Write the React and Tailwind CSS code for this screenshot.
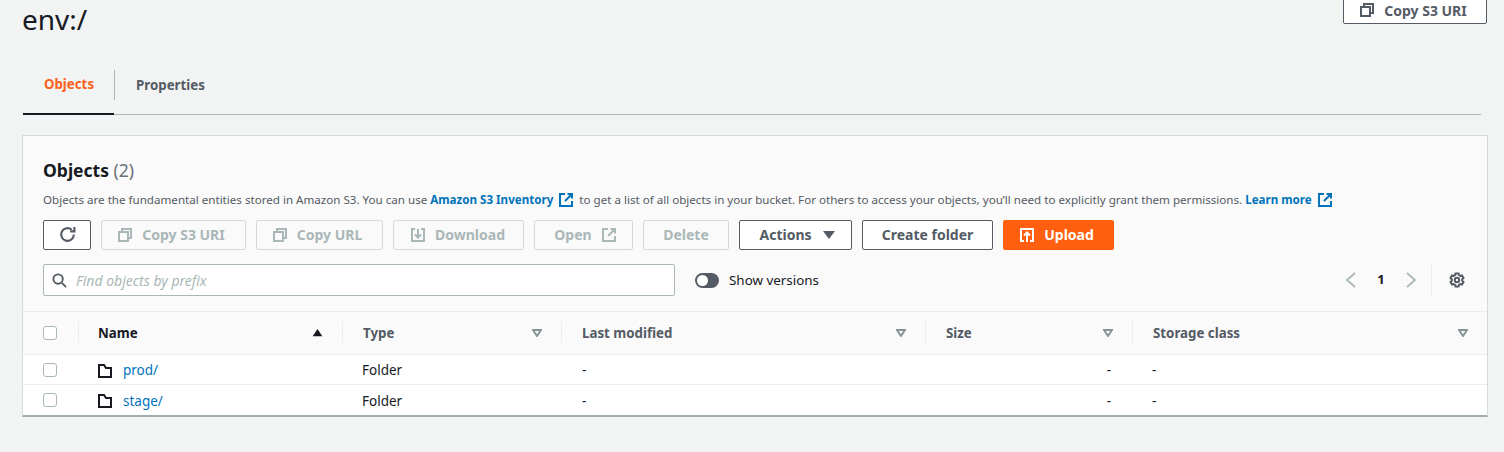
import React from "react";

const Copy = ({ c = "" }) => (
  <svg viewBox="0 0 14 14" className={`w-[14px] h-[14px] ${c}`} fill="none" stroke="currentColor" strokeWidth="2">
    <rect x="1" y="4" width="9" height="9" />
    <path d="M4 3.500V1h9v9h-2.500" />
  </svg>
);
const Ext = ({ c = "" }) => (
  <svg viewBox="0 0 14 14" className={c} fill="none" stroke="currentColor" strokeWidth="2">
    <path d="M6 1H1v12h12V8" />
    <path d="M8.500 1H13v4.500M13 1L6 8" />
  </svg>
);
const Sort = () => (
  <svg viewBox="0 0 10 8" className="w-[10px] h-[8px] text-[#879596]" fill="none" stroke="currentColor" strokeWidth="2">
    <path d="M1 1h8L5 7z" />
  </svg>
);
const Folder = () => (
  <svg viewBox="0 0 14 14" className="w-[14px] h-[14px] text-[#16191f]" fill="none" stroke="currentColor" strokeWidth="2">
    <path d="M1 1h5l2 3h5v9H1z" />
  </svg>
);
const Check = () => <span className="block w-[14px] h-[14px] rounded-[3px] border border-[#aab7b8] bg-white" />;

const Btn = ({ w, disabled, children }) => (
  <button
    className={`${w} h-[30px] pb-[1px] flex items-center justify-center gap-[10px] rounded-[2px] border text-[14px] font-bold ${
      disabled ? "border-[#d5dbdb] text-[#aab7b8] bg-transparent" : "border-[#545b64] text-[#545b64] bg-white"
    }`}
  >
    {children}
  </button>
);
const Div = () => <span className="absolute left-0 top-[10px] h-[21px] w-px bg-[#eaeded]" />;
const Head = ({ label, dark, divider, narrow, children }) => (
  <div className={`relative h-[42px] flex items-center justify-between ${narrow ? "pl-[20px]" : "pl-[21px]"} pr-[19px] text-[13.3px] font-bold ${dark ? "text-[#16191f]" : "text-[#545b64]"}`}>
    {divider && <Div />}
    <span className="pt-[2px]">{label}</span>
    {children}
  </div>
);
const Row = ({ name, last }) => (
  <div className={`grid grid-cols-[55px_264px_219px_364px_207px_1fr] h-[30px] items-center text-[13.5px] text-[#16191f] bg-white ${last ? "" : "border-b border-[#eaeded]"}`}>
    <div className="pl-[20px]"><Check /></div>
    <div className="flex items-center gap-[11px] pl-[20px] pt-[2px]">
      <Folder />
      <a className="text-[#0073bb]">{name}</a>
    </div>
    <div className="pl-[20px] pt-[2px]">Folder</div>
    <div className="pl-[21px] pt-[2px]">-</div>
    <div className="text-right pr-[21px] pt-[2px]">-</div>
    <div className="pl-[20px] pt-[2px]">-</div>
  </div>
);

export default function App() {
  return (
    <div className="w-[1504px] h-[452px] overflow-hidden bg-[#f2f3f3] font-['Noto_Sans',sans-serif]">
      <div className="flex justify-between items-start pl-[22px] pr-[17px] h-[70px]">
        <h1 className="text-[28px] leading-[36px] text-[#16191f] mt-[1px]">env:/</h1>
        <button className="-mt-[6px] w-[144px] h-[30px] pt-[2px] flex items-center justify-center gap-[10px] pr-[3px] rounded-[2px] border border-[#545b64] bg-white text-[14px] font-bold text-[#545b64]">
          <Copy />Copy S3 URI
        </button>
      </div>

      <div className="mx-[23px] h-[45px] flex border-b border-[#a9bcbc]">
        <div className="w-[91px] h-[45px] border-b-2 border-[#16191f] flex items-center justify-center text-[13.3px] font-bold text-[#f9621c] pb-[13px] pl-px">
          Objects
        </div>
        <div className="relative pl-[22px] h-[30px] pt-[2px] flex items-center text-[13.3px] font-bold text-[#545b64]">
          <span className="absolute left-0 top-0 h-[30px] w-px bg-[#aab7b8]" />
          Properties
        </div>
      </div>

      <div className="ml-[22px] mt-[20px] bg-[#fafafa] border-x border-t border-[#d5dbdb] border-b-2 border-b-[#a2adad] rounded-[1px] w-[1466px]">
        <div className="px-[20px] pt-[22px]">
          <div className="text-[17.500px] leading-[24px] font-bold text-[#16191f]">
            Objects <span className="font-normal text-[#687078]">(2)</span>
          </div>
          <p className="mt-[7px] h-[20px] pt-[2px] flex items-center text-[11.6px] text-[#545b64] whitespace-nowrap">
            Objects are the fundamental entities stored in Amazon S3. You can use&nbsp;
            <b className="text-[#0073bb]">Amazon S3 Inventory</b>
            <Ext c="w-[14px] h-[14px] mx-[6px] text-[#0073bb]" />
            to get a list of all objects in your bucket. For others to access your objects, you’ll need to explicitly grant them permissions.&nbsp;
            <b className="text-[#0073bb]">Learn more</b>
            <Ext c="w-[14px] h-[14px] ml-[6px] text-[#0073bb]" />
          </p>
          <div className="mt-[11px] flex gap-[10px]">
            <Btn w="w-[48px]">
              <svg viewBox="0 0 16 16" className="w-[17px] h-[17px]" fill="none" stroke="currentColor" strokeWidth="2">
                <path d="M14 8a6 6 0 1 1-2-4.500" />
                <path d="M14.500 1v4h-4" />
              </svg>
            </Btn>
            <Btn w="w-[145px]" disabled><Copy c="-ml-[4px]" />Copy S3 URI</Btn>
            <Btn w="w-[127px]" disabled><Copy c="-ml-[4px]" />Copy URL</Btn>
            <Btn w="w-[131px]" disabled>
              <svg viewBox="0 0 14 14" className="w-[14px] h-[14px] -ml-[1px]" fill="none" stroke="currentColor" strokeWidth="2">
                <path d="M4 1H1v12h12V1h-3M7 1v8M4 6.500L7 9.500 10 6.500" />
              </svg>
              Download
            </Btn>
            <Btn w="w-[99px]" disabled><span className="ml-[3px]">Open</span><Ext c="w-[14px] h-[14px]" /></Btn>
            <Btn w="w-[86px]" disabled>Delete</Btn>
            <Btn w="w-[113px]">
              <span className="ml-[3px]">Actions</span>
              <svg viewBox="0 0 12 10" className="w-[12px] h-[10px] ml-[1px]" fill="currentColor"><path d="M0 1h12L6 9z" /></svg>
            </Btn>
            <Btn w="w-[131px]">Create folder</Btn>
            <button className="w-[111px] h-[30px] pb-[1px] flex items-center justify-center gap-[10px] pr-[3px] rounded-[2px] bg-[#ff5f0f] text-[14px] font-bold text-white">
              <svg viewBox="0 0 14 14" className="w-[14px] h-[14px]" fill="none" stroke="currentColor" strokeWidth="2">
                <path d="M4 13H1V1h12v12h-3M7 14V5M4 7.500L7 4.500 10 7.500" />
              </svg>
              Upload
            </button>
          </div>
          <div className="mt-[14px] h-[32px] flex items-center">
            <div className="w-[632px] h-[32px] flex items-center gap-[9px] pl-[8px] rounded-[2px] border border-[#aab7b8] bg-white">
              <svg viewBox="0 0 16 16" className="w-[15px] h-[15px] text-[#545b64]" fill="none" stroke="currentColor" strokeWidth="2">
                <circle cx="6.500" cy="6.500" r="5" />
                <path d="M10.500 10.500L15 15" />
              </svg>
              <span className="pt-[1px] text-[14px] italic text-[#aab7b8]">Find objects by prefix</span>
            </div>
            <span className="ml-[20px] w-[24px] h-[15px] rounded-full bg-[#545b64] flex items-center pl-[2px]">
              <span className="w-[11px] h-[11px] rounded-full bg-white" />
            </span>
            <span className="ml-[10px] pt-[1px] text-[13.4px] text-[#16191f]">Show versions</span>
            <div className="ml-auto flex items-center">
              <svg viewBox="0 0 12 16" className="w-[12px] h-[16px] text-[#aab7b8]" fill="none" stroke="currentColor" strokeWidth="1.800">
                <path d="M10 1L2 8l8 7" />
              </svg>
              <span className="w-[48px] text-center text-[13px] font-bold text-[#16191f]">1</span>
              <svg viewBox="0 0 12 16" className="w-[12px] h-[16px] text-[#aab7b8]" fill="none" stroke="currentColor" strokeWidth="1.800">
                <path d="M2 1l8 7-8 7" />
              </svg>
              <span className="ml-[14px] w-px h-[30px] bg-[#eaeded]" />
              <svg viewBox="0 0 16 16" className="ml-[17px] mr-[2px] w-[16px] h-[16px] text-[#545b64]" fill="none" stroke="currentColor" strokeWidth="2">
                <circle cx="8" cy="8" r="2.200" />
                <path d="M6.500 1.500h3l.4 1.700 1.500.8 1.600-.6 1.500 2.600-1.300 1.200v1.600l1.300 1.200-1.500 2.600-1.600-.6-1.500.8-.4 1.700h-3l-.4-1.700-1.500-.8-1.600.6-1.500-2.600 1.300-1.200V7.200L1.500 6l1.500-2.600 1.600.6 1.500-.8z" />
              </svg>
            </div>
          </div>
        </div>

        <div className="mt-[15px] border-t border-[#eaeded]">
          <div className="grid grid-cols-[55px_264px_219px_364px_207px_1fr] h-[43px] items-center border-b border-[#eaeded]">
            <div className="pl-[20px] pb-[1px]"><Check /></div>
            <Head label="Name" dark divider narrow>
              <svg viewBox="0 0 12 10" className="w-[11px] h-[8px] text-[#16191f]" fill="currentColor"><path d="M6 0l6 9H0z" /></svg>
            </Head>
            <Head label="Type" divider><Sort /></Head>
            <Head label="Last modified" divider><Sort /></Head>
            <Head label="Size" divider><Sort /></Head>
            <Head label="Storage class" divider><Sort /></Head>
          </div>
          <Row name="prod/" />
          <Row name="stage/" last />
        </div>
      </div>
    </div>
  );
}
